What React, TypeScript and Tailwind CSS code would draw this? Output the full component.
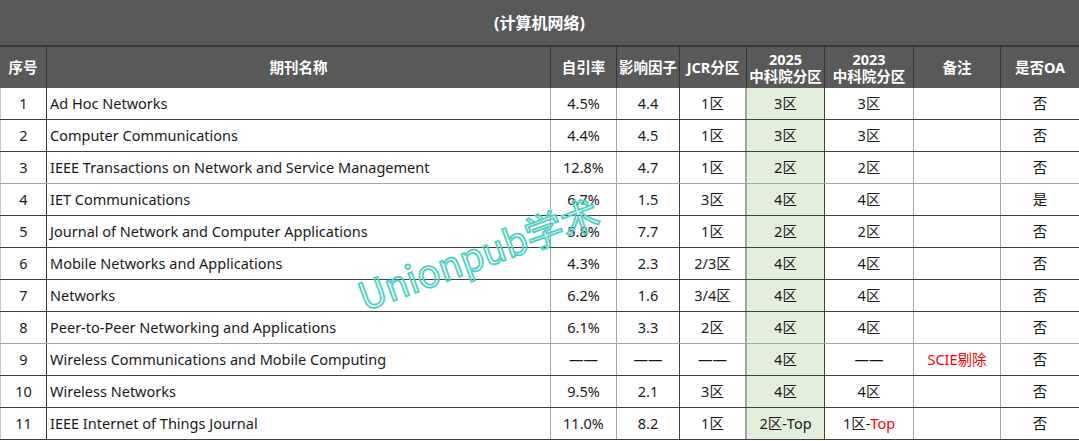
import React from "react";

type Row = {
  n: string;
  name: string;
  self: string;
  ifv: string;
  jcr: string;
  cas25: React.ReactNode;
  cas23: React.ReactNode;
  note: React.ReactNode;
  oa: string;
  line: "dark" | "gray";
};

const D = "——";

const rows: Row[] = [
  { n: "1", name: "Ad Hoc Networks", self: "4.5%", ifv: "4.4", jcr: "1区", cas25: "3区", cas23: "3区", note: "", oa: "否", line: "dark" },
  { n: "2", name: "Computer Communications", self: "4.4%", ifv: "4.5", jcr: "1区", cas25: "3区", cas23: "3区", note: "", oa: "否", line: "dark" },
  { n: "3", name: "IEEE Transactions on Network and Service Management", self: "12.8%", ifv: "4.7", jcr: "1区", cas25: "2区", cas23: "2区", note: "", oa: "否", line: "gray" },
  { n: "4", name: "IET Communications", self: "6.7%", ifv: "1.5", jcr: "3区", cas25: "4区", cas23: "4区", note: "", oa: "是", line: "dark" },
  { n: "5", name: "Journal of Network and Computer Applications", self: "5.8%", ifv: "7.7", jcr: "1区", cas25: "2区", cas23: "2区", note: "", oa: "否", line: "dark" },
  { n: "6", name: "Mobile Networks and Applications", self: "4.3%", ifv: "2.3", jcr: "2/3区", cas25: "4区", cas23: "4区", note: "", oa: "否", line: "dark" },
  { n: "7", name: "Networks", self: "6.2%", ifv: "1.6", jcr: "3/4区", cas25: "4区", cas23: "4区", note: "", oa: "否", line: "dark" },
  { n: "8", name: "Peer-to-Peer Networking and Applications", self: "6.1%", ifv: "3.3", jcr: "2区", cas25: "4区", cas23: "4区", note: "", oa: "否", line: "gray" },
  { n: "9", name: "Wireless Communications and Mobile Computing", self: D, ifv: D, jcr: D, cas25: "4区", cas23: D, note: <span className="text-[#ff0000]">SCIE剔除</span>, oa: "否", line: "dark" },
  { n: "10", name: "Wireless Networks", self: "9.5%", ifv: "2.1", jcr: "3区", cas25: "4区", cas23: "4区", note: "", oa: "否", line: "dark" },
  { n: "11", name: "IEEE Internet of Things Journal", self: "11.0%", ifv: "8.2", jcr: "1区", cas25: "2区-Top", cas23: <span>1区-<span className="text-[#ff0000]">Top</span></span>, note: "", oa: "否", line: "dark" },
];

const grid = "grid grid-cols-[47px_504px_66px_63px_67px_78px_89px_87px_78px]";
const font = { fontFamily: '"Noto Sans", "Noto Sans CJK SC", sans-serif' };

export default function App() {
  return (
    <div className="relative w-[1079px] h-[441px] overflow-hidden bg-white text-[#1a1a1a]" style={font}>
      {/* title */}
      <div className="h-[47px] bg-[#595959] border-b-2 border-[#3a3a3a] flex items-center justify-center text-white font-bold text-[16px]">
        (计算机网络)
      </div>
      {/* header */}
      <div className={`${grid} h-[41px] bg-[#595959] text-white font-bold text-[14.5px] leading-[17px]`}>
        <div className="flex items-center justify-center border-r border-[#333333]">序号</div>
        <div className="flex items-center justify-center border-r border-[#333333]">期刊名称</div>
        <div className="flex items-center justify-center border-r border-[#333333]">自引率</div>
        <div className="flex items-center justify-center border-r border-[#333333]">影响因子</div>
        <div className="flex items-center justify-center border-r border-[#333333]">JCR分区</div>
        <div className="flex flex-col items-center justify-center border-r border-[#333333]"><span>2025</span><span>中科院分区</span></div>
        <div className="flex flex-col items-center justify-center border-r border-[#333333]"><span>2023</span><span>中科院分区</span></div>
        <div className="flex items-center justify-center border-r border-[#333333]">备注</div>
        <div className="flex items-center justify-center">是否OA</div>
      </div>
      {/* body */}
      <div className="text-[14.5px]">
        {rows.map((r) => (
          <div
            key={r.n}
            className={`${grid} h-[32px] border-b ${r.line === "dark" ? "border-[#404040]" : "border-[#a6a6a6]"}`}
          >
            <div className="flex items-center justify-center border-r border-l border-l-[#c8c8c8] border-r-[#333333]">{r.n}</div>
            <div className="flex items-center pl-[3px] border-r border-[#a6a6a6] whitespace-nowrap">{r.name}</div>
            <div className="flex items-center justify-center border-r border-[#a6a6a6]">{r.self}</div>
            <div className="flex items-center justify-center border-r border-[#404040]">{r.ifv}</div>
            <div className="flex items-center justify-center border-r-2 border-[#a6a6a6]">{r.jcr}</div>
            <div className="flex items-center justify-center bg-[#e2efda] border-r border-[#404040]">{r.cas25}</div>
            <div className="flex items-center justify-center border-r border-[#a6a6a6]">{r.cas23}</div>
            <div className="flex items-center justify-center border-r border-[#a6a6a6]">{r.note}</div>
            <div className="flex items-center justify-center">{r.oa}</div>
          </div>
        ))}
      </div>
      {/* watermark */}
      <div
        className="absolute left-[478px] top-[253px] -translate-x-1/2 -translate-y-1/2 -rotate-[20deg] text-[38px] leading-none whitespace-nowrap text-transparent [-webkit-text-stroke:1.8px_#52cfc3]"
        style={{ fontFamily: '"Noto Sans CJK SC", sans-serif' }}
      >
        Unionpub学术
      </div>
    </div>
  );
}
